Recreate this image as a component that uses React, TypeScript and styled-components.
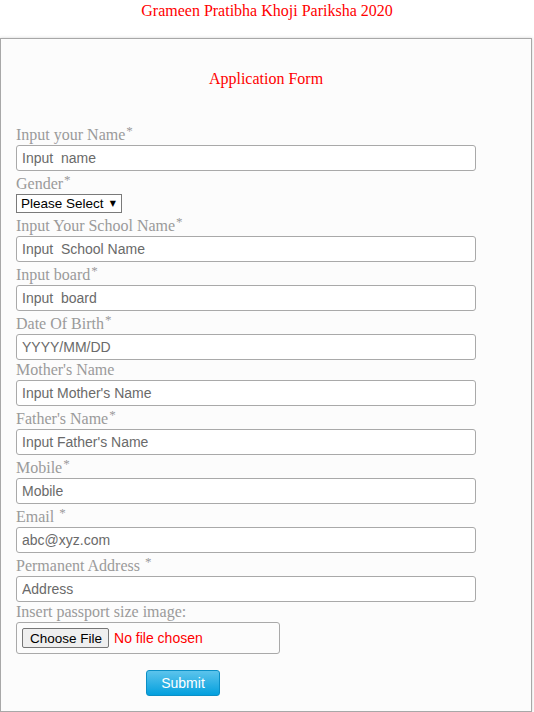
import React from "react";
import styled, { createGlobalStyle } from "styled-components";

const GlobalStyle = createGlobalStyle`
  body {
    margin: 0;
    background: #ffffff;
    font-family: "Liberation Serif", "Times New Roman", serif;
  }
`;

const Title = styled.div`
  text-align: center;
  color: #ff0000;
  font-size: 16px;
  line-height: 22px;
`;

const FormBox = styled.form`
  width: 532px;
  box-sizing: border-box;
  margin-top: 16px;
  padding: 30px 15px 15px;
  border: 1px solid #a8a8a8;
  background: #fcfcfc;
  box-shadow: 0 0 3px rgba(0, 0, 0, 0.18);
  display: flex;
  flex-direction: column;
  align-items: flex-start;

  & h2 {
    align-self: stretch;
    margin: 0 0 33px;
    text-align: center;
    color: #ff0000;
    font-weight: 400;
    font-size: 16px;
    line-height: 20px;
  }
`;

const Label = styled.label<{ $required?: boolean }>`
  display: block;
  padding-top: ${(p) => (p.$required ? "3px" : "0")};
  color: #9a9a9a;
  font-size: 16px;
  line-height: 20px;
  white-space: pre;
`;

const Star = styled.span`
  margin-left: 1px;
  font-size: 13px;
  line-height: 0;
  vertical-align: 5px;
`;

const TextInput = styled.input`
  width: 460px;
  height: 26px;
  box-sizing: border-box;
  margin: 0;
  padding: 0 5px;
  border: 1px solid #a9a9a9;
  border-radius: 3px;
  background: #ffffff;
  font-family: "Liberation Sans", Arial, sans-serif;
  font-size: 14px;
  color: #333;
  outline: none;

  &::placeholder {
    color: #6a6a6a;
  }
`;

const SelectWrap = styled.div`
  position: relative;
  display: inline-block;
`;

const Select = styled.select`
  appearance: none;
  width: 106px;
  height: 19px;
  box-sizing: border-box;
  margin: 0;
  padding: 0 12px 0 4px;
  border: 1px solid #7a7a7a;
  border-radius: 0;
  background: #ffffff;
  color: #000;
  font-family: "Liberation Sans", Arial, sans-serif;
  font-size: 13.5px;
  line-height: 17px;
`;

const Caret = styled.span`
  position: absolute;
  right: 6px;
  top: 5px;
  font-size: 8px;
  line-height: 9px;
  color: #000;
  pointer-events: none;
  font-family: "DejaVu Sans", sans-serif;
`;

const FileBox = styled.div`
  width: 264px;
  height: 32px;
  box-sizing: border-box;
  padding: 6px 5px;
  border: 1px solid #a9a9a9;
  border-radius: 3px;
  background: #fcfcfc;
  display: flex;
  align-items: center;

  & input {
    margin: 0;
    color: #ff0000;
    font-family: "Liberation Sans", Arial, sans-serif;
    font-size: 14px;
  }

  & input::file-selector-button {
    height: 20px;
    margin-right: 5px;
    padding: 0 6px 0 7px;
    border: 1px solid #767676;
    border-radius: 2px;
    background: #efefef;
    color: #000;
    font-family: "Liberation Sans", Arial, sans-serif;
    font-size: 13.5px;
  }
`;

const SubmitButton = styled.button`
  margin: 16px 0 0 130px;
  width: 74px;
  height: 26px;
  border: 1px solid #0b8fc6;
  border-radius: 3px;
  background: linear-gradient(to bottom, #5cc4ec, #03a0de);
  color: #ffffff;
  font-family: "Liberation Sans", Arial, sans-serif;
  font-size: 14px;
  padding: 0;
`;

type Field = {
  label: string;
  placeholder: string;
  star?: "tight" | "spaced";
};

const fieldsAfterGender: Field[] = [
  { label: "Input Your School Name", placeholder: "Input  School Name", star: "tight" },
  { label: "Input board", placeholder: "Input  board", star: "tight" },
  { label: "Date Of Birth", placeholder: "YYYY/MM/DD", star: "tight" },
  { label: "Mother's Name", placeholder: "Input Mother's Name" },
  { label: "Father's Name", placeholder: "Input Father's Name", star: "tight" },
  { label: "Mobile", placeholder: "Mobile", star: "tight" },
  { label: "Email", placeholder: "abc@xyz.com", star: "spaced" },
  { label: "Permanent Address", placeholder: "Address", star: "spaced" },
];

const FieldLabel = ({ label, star }: { label: string; star?: Field["star"] }) => (
  <Label $required={!!star}>
    {label}
    {star === "spaced" ? " " : ""}
    {star && <Star>*</Star>}
  </Label>
);

const App = () => {
  return (
    <>
      <GlobalStyle />
      <Title>Grameen Pratibha Khoji Pariksha 2020</Title>
      <FormBox onSubmit={(e) => e.preventDefault()}>
        <h2>Application Form</h2>

        <FieldLabel label="Input your Name" star="tight" />
        <TextInput placeholder="Input  name" />

        <FieldLabel label="Gender" star="tight" />
        <SelectWrap>
          <Select defaultValue="">
            <option value="">Please Select</option>
            <option value="male">Male</option>
            <option value="female">Female</option>
          </Select>
          <Caret>▼</Caret>
        </SelectWrap>

        {fieldsAfterGender.map((f) => (
          <React.Fragment key={f.label}>
            <FieldLabel label={f.label} star={f.star} />
            <TextInput placeholder={f.placeholder} />
          </React.Fragment>
        ))}

        <FieldLabel label="Insert passport size image:" />
        <FileBox>
          <input type="file" />
        </FileBox>

        <SubmitButton type="submit">Submit</SubmitButton>
      </FormBox>
    </>
  );
};

export default App;
